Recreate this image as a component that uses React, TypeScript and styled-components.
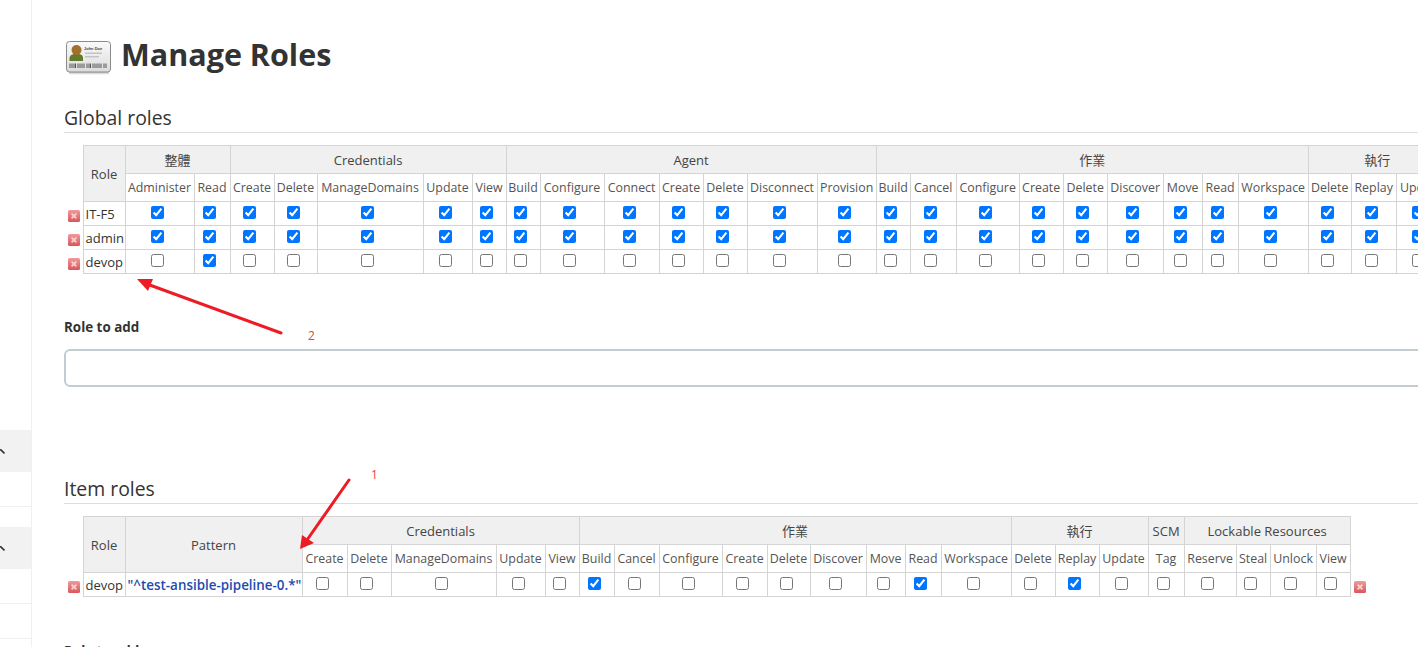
import React from "react";
import styled, { createGlobalStyle } from "styled-components";

const GlobalStyle = createGlobalStyle`
  html, body { margin: 0; padding: 0; height: 100%; overflow: hidden; background: #fff; }
  body { font-family: "Open Sans", "Noto Sans", "Noto Sans CJK TC", sans-serif; color: #333; }
  #root { height: 100%; }
`;

const Page = styled.div`
  position: relative;
  display: flex;
  width: 1418px;
  height: 647px;
  overflow: hidden;
`;

const Sidebar = styled.aside`
  flex: 0 0 31px;
  box-sizing: content-box;
  border-right: 1px solid #f0f0f0;
  padding-top: 430px;
  display: flex;
  flex-direction: column;
`;

const SideHead = styled.div`
  height: 42px;
  background: #f2f2f2;
  display: flex;
  align-items: flex-start;
  padding-top: ${(p) => p.$top}px;
  box-sizing: border-box;
`;

const SideRow = styled.div`
  height: ${(p) => p.$h}px;
  box-sizing: border-box;
  border-bottom: ${(p) => (p.$line ? "1px solid #f0f0f0" : "none")};
`;

const Main = styled.main`
  flex: 1;
  min-width: 0;
  padding: 30px 0 0 32px;
  overflow: hidden;
`;

const Title = styled.div`
  display: flex;
  align-items: center;
  height: 48px;
  gap: 7px;
`;

const H1 = styled.h1`
  margin: 0;
  font-size: 30.5px;
  font-weight: 700;
  line-height: 48px;
  color: #333;
`;

const CardSvg = styled.svg`
  flex: none;
  margin: 9px 0 0 2px;
`;

const SectionHead = styled.h2`
  margin: ${(p) => p.$top}px 0 12px;
  height: 27px;
  line-height: 26px;
  box-sizing: content-box;
  font-size: 19.4px;
  font-weight: 400;
  color: #333;
  border-bottom: 1px solid #ddd;
`;

const Table = styled.table`
  table-layout: fixed;
  border-collapse: collapse;
  width: ${(p) => p.$w}px;
  font-size: 13px;
`;

const Col = styled.col`
  width: ${(p) => p.$w}px;
`;

const Head = styled.th`
  background: #f0f0f0;
  border: 1px solid #d4d4d4;
  font-weight: 400;
  height: ${(p) => p.$h || 27}px;
  padding: 0;
  text-align: center;
  white-space: nowrap;
  color: #444;
`;

const SubHead = styled.th`
  background: #fff;
  border: 1px solid #d4d4d4;
  font-weight: 400;
  height: 27px;
  padding: 0;
  text-align: center;
  white-space: nowrap;
  color: #555;
  font-size: 12.4px;
`;

const Blank = styled.td`
  border: none;
  padding: 0;
`;

const IconCell = styled.td`
  border: none;
  padding: 5px 0 0 ${(p) => p.$left}px;
  vertical-align: middle;
`;

const RoleCell = styled.td`
  border: 1px solid #d4d4d4;
  padding: 0 0 0 2px;
  height: 23px;
  white-space: nowrap;
  overflow: visible;
  color: #333;
`;

const PatternCell = styled(RoleCell)`
  color: #1d4cae;
  font-weight: 600;
  font-size: 13.4px;
`;

const CheckCell = styled.td`
  border: 1px solid #d4d4d4;
  padding: 0 5px 0 0;
  text-align: center;
  vertical-align: middle;
`;

const Check = styled.input.attrs({ type: "checkbox" })`
  display: block;
  margin: 0 auto 2px;
`;

const FieldLabel = styled.label`
  display: block;
  margin: 44px 0 12px;
  font-size: 13.4px;
  font-weight: 700;
  line-height: 19px;
  color: #333;
`;

const TrailingLabel = styled(FieldLabel)`
  margin-top: 45px;
`;

const TextBox = styled.input`
  display: block;
  width: 1500px;
  height: 38px;
  box-sizing: border-box;
  border: 2px solid #c3ccd1;
  border-radius: 6px;
  background: #fff;
  outline: none;
`;

const Overlay = styled.svg`
  position: absolute;
  left: 0;
  top: 0;
  pointer-events: none;
`;

const Mark = styled.text`
  font-size: 12px;
  font-family: "Open Sans", sans-serif;
  fill: #ee3b44;
`;

const DeleteSvg = styled.svg`
  display: block;
`;

const DeleteIcon = () => (
  <DeleteSvg width="12" height="12" viewBox="0 0 12 12">
    <defs>
      <linearGradient id="del" x1="0" y1="0" x2="0" y2="1">
        <stop offset="0" stopColor="#ee9c9c" />
        <stop offset="1" stopColor="#d9565a" />
      </linearGradient>
    </defs>
    <rect x="0" y="0" width="12" height="12" rx="1.5" fill="url(#del)" />
    <path d="M3.6 3.6 L8.4 8.4 M8.4 3.6 L3.6 8.4" stroke="#fde8e8" strokeWidth="1.8" strokeOpacity="0.8" />
  </DeleteSvg>
);

const CardIcon = () => (
  <CardSvg width="48" height="36" viewBox="0 0 48 36">
    <defs>
      <linearGradient id="card" x1="0" y1="0" x2="0" y2="1">
        <stop offset="0" stopColor="#fafafa" />
        <stop offset="1" stopColor="#dcdcdc" />
      </linearGradient>
      <linearGradient id="shade" x1="0" y1="0" x2="0" y2="1">
        <stop offset="0" stopColor="#bbb" />
        <stop offset="1" stopColor="#fff" />
      </linearGradient>
    </defs>
    <rect x="3" y="31" width="40" height="3" fill="url(#shade)" />
    <rect x="0.5" y="0.5" width="44" height="30.5" rx="3" fill="url(#card)" stroke="#8b8b8b" />
    <path d="M3.5 20 L3.5 17 Q4 13.5 8 13 L13 13 Q17 13.5 17 17 L17 20 Z" fill="#66782b" />
    <circle cx="10.5" cy="9" r="5" fill="#a1702c" />
    <text x="18" y="8.5" fontSize="4" fontWeight="700" fill="#444" fontFamily="Liberation Sans, sans-serif">John Doe</text>
    <rect x="19" y="11.5" width="17" height="1.5" fill="#c4c4c4" />
    <rect x="19" y="15" width="14" height="1.5" fill="#c4c4c4" />
    <path
      d="M4 22.5v4.5M6 22.5v4.5M8 22.5v4.5M9.5 22.5v4.5M12 22.5v4.5M14 22.5v4.5M16 22.5v4.5M18 22.5v4.5M21 22.5v4.5M23 22.5v4.5M24.5 22.5v4.5M27 22.5v4.5M29 22.5v4.5M31 22.5v4.5M33 22.5v4.5M35 22.5v4.5M38 22.5v4.5M40 22.5v4.5"
      stroke="#555"
      strokeWidth="1"
    />
  </CardSvg>
);

const Chevron = () => (
  <svg width="5" height="6" viewBox="0 0 5 6">
    <path d="M0 0 L4.5 4.5" stroke="#333" strokeWidth="1.6" fill="none" />
  </svg>
);

type Perm = [string, number];
type Group = { name: string; perms: Perm[] };

const globalGroups: Group[] = [
  { name: "整體", perms: [["Administer", 69], ["Read", 36]] },
  { name: "Credentials", perms: [["Create", 44], ["Delete", 43], ["ManageDomains", 106], ["Update", 49], ["View", 34]] },
  { name: "Agent", perms: [["Build", 34], ["Configure", 64], ["Connect", 55], ["Create", 44], ["Delete", 44], ["Disconnect", 70], ["Provision", 59]] },
  { name: "作業", perms: [["Build", 34], ["Cancel", 46], ["Configure", 63], ["Create", 44], ["Delete", 44], ["Discover", 56], ["Move", 39], ["Read", 36], ["Workspace", 70]] },
  { name: "執行", perms: [["Delete", 43], ["Replay", 45], ["Update", 50]] },
];

const itemGroups: Group[] = [
  { name: "Credentials", perms: [["Create", 45], ["Delete", 44], ["ManageDomains", 105], ["Update", 49], ["View", 34]] },
  { name: "作業", perms: [["Build", 35], ["Cancel", 45], ["Configure", 63], ["Create", 45], ["Delete", 43], ["Discover", 56], ["Move", 39], ["Read", 36], ["Workspace", 70]] },
  { name: "執行", perms: [["Delete", 44], ["Replay", 44], ["Update", 49]] },
  { name: "SCM", perms: [["Tag", 36]] },
  { name: "Lockable Resources", perms: [["Reserve", 52], ["Steal", 34], ["Unlock", 46], ["View", 34]] },
];

const flat = (g: Group[]) => g.flatMap((x) => x.perms);
const sum = (p: Perm[]) => p.reduce((a, b) => a + b[1], 0);

const globalRows: { role: string; on: (i: number) => boolean }[] = [
  { role: "IT-F5", on: () => true },
  { role: "admin", on: () => true },
  { role: "devop", on: (i) => i === 1 },
];

const itemChecked = new Set([5, 12, 15]);

export default function App() {
  const gPerms = flat(globalGroups);
  const iPerms = flat(itemGroups);
  return (
    <Page>
      <GlobalStyle />
      <Sidebar>
        <SideHead $top={19}><Chevron /></SideHead>
        <SideRow $h={35} $line />
        <SideRow $h={20} />
        <SideHead $top={19}><Chevron /></SideHead>
        <SideRow $h={35} $line />
        <SideRow $h={35} $line />
      </Sidebar>
      <Main>
        <Title>
          <CardIcon />
          <H1>Manage Roles</H1>
        </Title>

        <SectionHead $top={27}>Global roles</SectionHead>
        <Table $w={19 + 42 + sum(gPerms)}>
          <colgroup>
            <Col $w={19} />
            <Col $w={42} />
            {gPerms.map(([, w], i) => (
              <Col key={i} $w={w} />
            ))}
          </colgroup>
          <thead>
            <tr>
              <Blank rowSpan={2} />
              <Head rowSpan={2}>Role</Head>
              {globalGroups.map((g) => (
                <Head key={g.name} colSpan={g.perms.length} $h={27}>{g.name}</Head>
              ))}
            </tr>
            <tr>
              {gPerms.map(([n], i) => (
                <SubHead key={i}>{n}</SubHead>
              ))}
            </tr>
          </thead>
          <tbody>
            {globalRows.map((r) => (
              <tr key={r.role}>
                <IconCell $left={4}><DeleteIcon /></IconCell>
                <RoleCell>{r.role}</RoleCell>
                {gPerms.map((_, i) => (
                  <CheckCell key={i}><Check defaultChecked={r.on(i)} /></CheckCell>
                ))}
              </tr>
            ))}
          </tbody>
        </Table>

        <FieldLabel htmlFor="role-add">Role to add</FieldLabel>
        <TextBox id="role-add" />

        <SectionHead $top={89}>Item roles</SectionHead>
        <Table $w={19 + 42 + 177 + sum(iPerms) + 20}>
          <colgroup>
            <Col $w={19} />
            <Col $w={42} />
            <Col $w={177} />
            {iPerms.map(([, w], i) => (
              <Col key={i} $w={w} />
            ))}
            <Col $w={20} />
          </colgroup>
          <thead>
            <tr>
              <Blank rowSpan={2} />
              <Head rowSpan={2}>Role</Head>
              <Head rowSpan={2}>Pattern</Head>
              {itemGroups.map((g) => (
                <Head key={g.name} colSpan={g.perms.length} $h={27}>{g.name}</Head>
              ))}
              <Blank rowSpan={2} />
            </tr>
            <tr>
              {iPerms.map(([n], i) => (
                <SubHead key={i}>{n}</SubHead>
              ))}
            </tr>
          </thead>
          <tbody>
            <tr>
              <IconCell $left={4}><DeleteIcon /></IconCell>
              <RoleCell>devop</RoleCell>
              <PatternCell>"^test-ansible-pipeline-0.*"</PatternCell>
              {iPerms.map((_, i) => (
                <CheckCell key={i}><Check defaultChecked={itemChecked.has(i)} /></CheckCell>
              ))}
              <IconCell $left={3}><DeleteIcon /></IconCell>
            </tr>
          </tbody>
        </Table>

        <TrailingLabel htmlFor="item-add">Role to add</TrailingLabel>
      </Main>

      <Overlay width="1418" height="647" viewBox="0 0 1418 647">
        <path d="M281 333 L147 284" stroke="#ed1c24" strokeWidth="3" strokeLinecap="round" />
        <polygon points="137,279 153,279 148,291" fill="#ed1c24" />
        <Mark x="308" y="340">2</Mark>
        <path d="M349 480 L307 540" stroke="#ed1c24" strokeWidth="3" strokeLinecap="round" />
        <polygon points="300,549 302,535 314,543" fill="#ed1c24" />
        <Mark x="371" y="479">1</Mark>
      </Overlay>
    </Page>
  );
}
